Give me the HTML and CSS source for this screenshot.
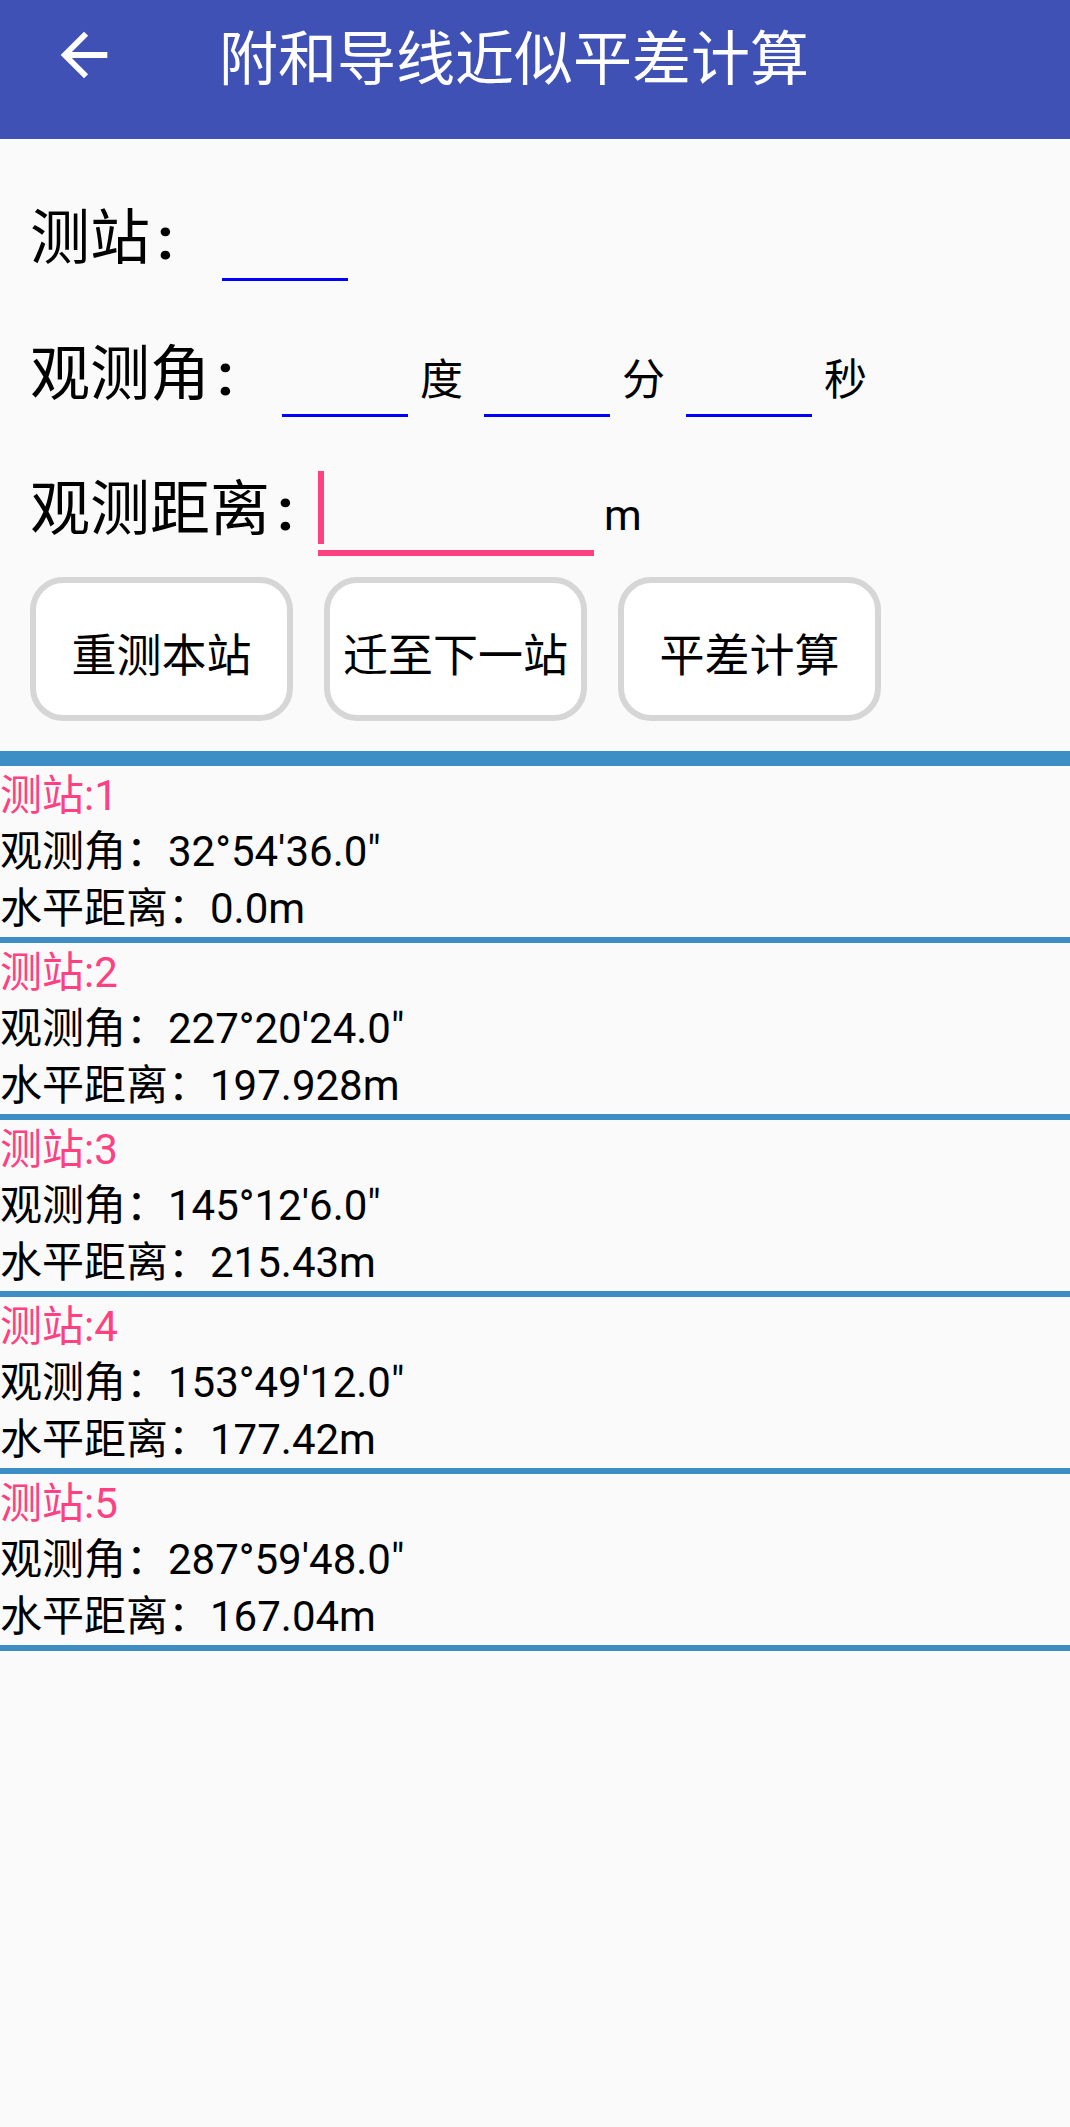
FILE: index.html
```html
<!DOCTYPE html>
<html lang="zh-CN">
<head>
<meta charset="utf-8">
<title>附和导线近似平差计算</title>
<link rel="stylesheet" href="styles.css">
</head>
<body>
<header class="appbar">
  <svg class="back" viewBox="0 0 24 24" aria-hidden="true"><path d="M20 11H7.83l5.59-5.59L12 4l-8 8 8 8 1.41-1.41L7.83 13H20v-2z" fill="#ffffff"/></svg>
  <h1 class="title">附和导线近似平差计算</h1>
</header>
<main>
  <section class="form">
    <div class="row row-first">
      <span class="label label-station">测站<span class="colon">:</span></span>
      <div class="field">&nbsp;</div>
    </div>
    <div class="row row-angle">
      <span class="label label-angle">观测角<span class="colon">:</span></span>
      <div class="field">&nbsp;</div><span class="unit">度</span>
      <div class="field">&nbsp;</div><span class="unit">分</span>
      <div class="field">&nbsp;</div><span class="unit">秒</span>
    </div>
    <div class="row row-dist">
      <span class="label label-dist">观测距离<span class="colon">:</span></span>
      <div class="field field-active"><span class="caret"></span>&nbsp;</div><span class="unit unit-m">m</span>
    </div>
    <div class="buttons">
      <button class="btn" type="button">重测本站</button>
      <button class="btn" type="button">迁至下一站</button>
      <button class="btn" type="button">平差计算</button>
    </div>
  </section>
  <section class="list">
    <div class="item">
      <div class="item-title">测站:1</div>
      <div>观测角：32°54'36.0"</div>
      <div>水平距离：0.0m</div>
    </div>
    <div class="item">
      <div class="item-title">测站:2</div>
      <div>观测角：227°20'24.0"</div>
      <div>水平距离：197.928m</div>
    </div>
    <div class="item">
      <div class="item-title">测站:3</div>
      <div>观测角：145°12'6.0"</div>
      <div>水平距离：215.43m</div>
    </div>
    <div class="item">
      <div class="item-title">测站:4</div>
      <div>观测角：153°49'12.0"</div>
      <div>水平距离：177.42m</div>
    </div>
    <div class="item">
      <div class="item-title">测站:5</div>
      <div>观测角：287°59'48.0"</div>
      <div>水平距离：167.04m</div>
    </div>
  </section>
</main>
</body>
</html>
```
FILE: styles.css
```css
html, body {
  margin: 0;
  padding: 0;
  background: #FAFAFA;
}
body {
  font-family: Roboto, "Noto Sans CJK SC", sans-serif;
  color: #000;
}

/* App bar */
.appbar {
  height: 139px;
  box-sizing: border-box;
  background: #3F51B5;
  display: flex;
  align-items: flex-start;
  padding: 20px 0 0 49px;
}
.back {
  width: 70px;
  height: 70px;
  flex: none;
}
.title {
  margin: 10px 0 0 100px;
  font-size: 59px;
  line-height: 59px;
  font-weight: 400;
  color: #fff;
}

/* Form */
.form {
  padding: 69.5px 0 0 30px;
}
.row {
  display: flex;
  align-items: baseline;
}
.row-angle { margin-top: 63.5px; }
.row-dist { margin-top: 62.5px; }
.label {
  flex: none;
  font-size: 60px;
  line-height: 60px;
}
.colon {
  margin-left: 7px;
  font-weight: 700;
}
.label-station { width: 192px; }
.label-angle { width: 252px; }
.label-dist { width: 288px; }

.field {
  flex: none;
  width: 126px;
  font-size: 60px;
  line-height: 60px;
  padding-bottom: 9.5px;
  border-bottom: 3px solid #0000FF;
  margin-right: 12px;
}
.field-active {
  position: relative;
  width: 276px;
  padding-bottom: 10.5px;
  border-bottom: 6px solid #FF4081;
  margin-right: 10px;
}
.caret {
  position: absolute;
  left: 0;
  top: -8.5px;
  width: 6px;
  height: 73px;
  background: #FF4081;
}
.unit {
  flex: none;
  width: 43px;
  font-size: 43px;
  line-height: 43px;
  margin-right: 21px;
}
.unit-m { width: auto; }

/* Buttons */
.buttons {
  display: flex;
  gap: 31px;
  margin-top: 21px;
}
.btn {
  width: 263px;
  height: 144px;
  box-sizing: border-box;
  border: 6px solid #D6D6D6;
  border-radius: 33px;
  background: #FFFFFF;
  font-family: Roboto, "Noto Sans CJK SC", sans-serif;
  font-size: 45px;
  color: #000;
  display: flex;
  align-items: center;
  justify-content: center;
  padding: 6px 0 0 0;
  margin: 0;
  white-space: nowrap;
}

/* List */
.list {
  margin-top: 30px;
  border-top: 15px solid #3D8EC5;
}
.item {
  height: 177px;
  box-sizing: border-box;
  padding-top: 2px;
  border-bottom: 6px solid #3D8EC5;
  font-size: 42px;
  line-height: 56.4px;
  white-space: nowrap;
}
.item-title {
  color: #FF4081;
}
```
